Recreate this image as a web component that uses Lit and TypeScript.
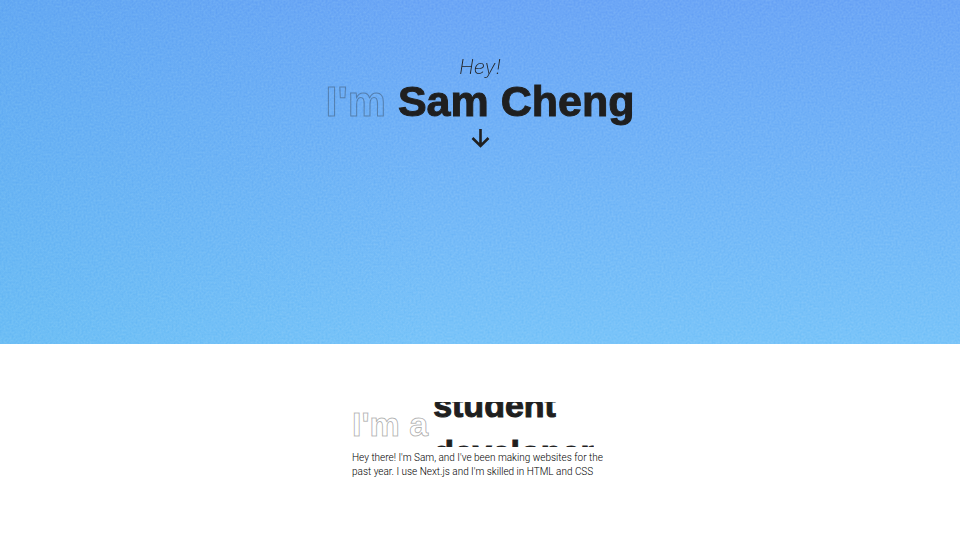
import { LitElement, html, css } from "lit";
import { customElement } from "lit/decorators.js";

@customElement("app-root")
export class AppRoot extends LitElement {
  static styles = css`
    :host {
      display: block;
      min-height: 100vh;
      background: #fff;
      color: #1f1f1f;
      font-family: "Liberation Sans", Arial, sans-serif;
    }
    h1,
    h2,
    p {
      margin: 0;
    }
    .hero {
      position: relative;
      isolation: isolate;
      box-sizing: border-box;
      min-height: 344px;
      padding: 54px 24px 24px;
      display: flex;
      flex-direction: column;
      align-items: center;
      background:
        linear-gradient(90deg, rgba(80, 175, 235, 0.3), rgba(110, 180, 250, 0) 45%),
        linear-gradient(180deg, #6ca6f6, #79c4f9);
    }
    .grain {
      position: absolute;
      inset: 0;
      z-index: -1;
      width: 100%;
      height: 100%;
      opacity: 0.13;
      mix-blend-mode: overlay;
      pointer-events: none;
    }
    .hey {
      font-family: Inter, "Liberation Sans", sans-serif;
      font-size: 20px;
      line-height: 26px;
      font-weight: 200;
      font-style: italic;
    }
    .title {
      font-size: 43px;
      line-height: 42px;
      font-weight: 700;
      text-align: center;
    }
    .solid {
      -webkit-text-stroke: 1px #1f1f1f;
    }
    .outline {
      color: transparent;
      -webkit-text-stroke: 1px rgba(31, 31, 31, 0.35);
    }
    .down {
      display: block;
      margin-top: 2px;
      color: #1f1f1f;
    }
    .down svg {
      display: block;
    }
    .about {
      box-sizing: border-box;
      width: 256px;
      max-width: 100%;
      margin: 0 auto;
      padding: 58px 0 24px;
    }
    .role {
      display: flex;
      align-items: center;
      gap: 5px;
      font-size: 34px;
      line-height: 45px;
      font-weight: 700;
      white-space: nowrap;
    }
    .words {
      height: 45px;
      overflow: hidden;
    }
    .track {
      display: block;
      margin-top: -20px;
    }
    .word {
      display: block;
      line-height: 47px;
    }
    .bio {
      margin-top: 4px;
      color: #000;
      font-family: Roboto, "Liberation Sans", sans-serif;
      font-size: 10px;
      line-height: 14px;
      font-weight: 300;
      white-space: nowrap;
    }
  `;

  render() {
    return html`
      <header class="hero">
        <svg class="grain" aria-hidden="true">
          <filter id="noise" x="0" y="0" width="100%" height="100%" color-interpolation-filters="sRGB">
            <feTurbulence type="fractalNoise" baseFrequency="0.5" numOctaves="2" />
            <feColorMatrix values="1 0 0 0 0  1 0 0 0 0  1 0 0 0 0  0 0 0 0 1" />
          </filter>
          <rect width="100%" height="100%" filter="url(#noise)" />
        </svg>
        <p class="hey">Hey!</p>
        <h1 class="title"><span class="outline">I'm</span> <span class="solid">Sam Cheng</span></h1>
        <a class="down" href="#about" aria-label="Scroll down">
          <svg width="28" height="28" viewBox="0 0 28 28" fill="none" stroke="currentColor" stroke-width="2.6">
            <path d="M14.500 5v17M6.500 14l8 8 8-8" />
          </svg>
        </a>
      </header>
      <main class="about" id="about">
        <h2 class="role">
          <span class="outline">I'm a</span>
          <span class="words">
            <span class="track">
              <span class="word solid">student</span>
              <span class="word solid">developer</span>
            </span>
          </span>
        </h2>
        <p class="bio">
          Hey there! I'm Sam, and I've been making websites for the<br />past year. I use Next.js and I'm skilled in
          HTML and CSS
        </p>
      </main>
    `;
  }
}
